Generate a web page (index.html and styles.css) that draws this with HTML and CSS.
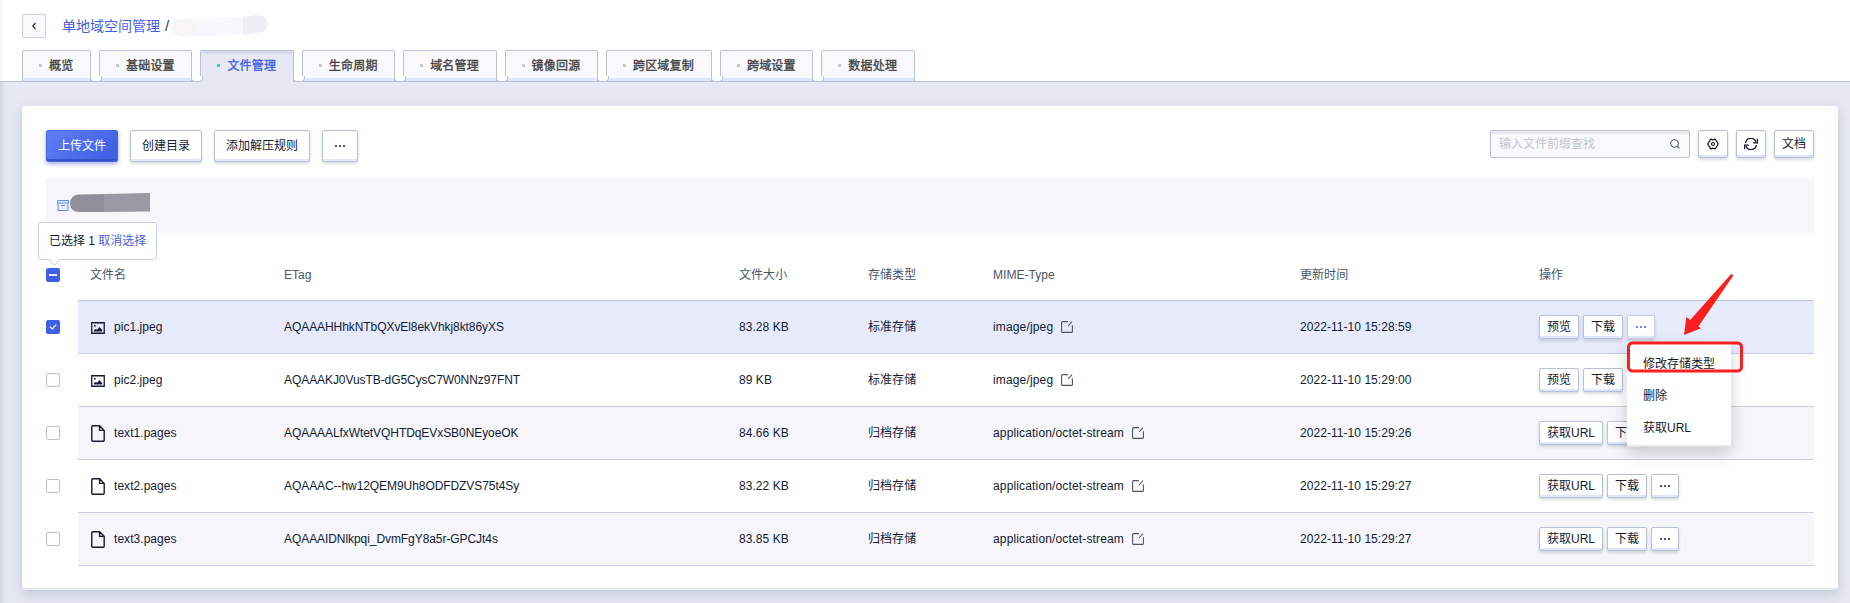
FILE: index.html
```
<!DOCTYPE html>
<html lang="zh-CN">
<head>
<meta charset="utf-8">
<title>文件管理</title>
<link rel="stylesheet" href="styles.css">
</head>
<body>
<svg class="sprite" width="0" height="0">
  <symbol id="i-image" viewBox="0 0 14 12"><path d="M.75.75h12.5v10.5H.75z" fill="none" stroke="currentColor" stroke-width="1.3"/><rect x="3" y="3" width="1.600" height="1.600" fill="currentColor"/><path d="M2.800 9.600V8.300L4.800 6.900l1.300.9L8.500 5l2.700 2.900v1.700z" fill="currentColor"/></symbol>
  <symbol id="i-file" viewBox="0 0 14 17"><path d="M8.6.8H1.7a.9.9 0 0 0-.9.9v13.6c0 .5.4.9.9.9h10.6c.5 0 .9-.4.9-.9V5.4zM8.6.8v4.6h4.6" fill="none" stroke="currentColor" stroke-width="1.4" stroke-linejoin="round"/></symbol>
  <symbol id="i-edit" viewBox="0 0 12 12"><path d="M7 .6H1.6a1 1 0 0 0-1 1v8.800a1 1 0 0 0 1 1h8.800a1 1 0 0 0 1-1V4.200M7 5l4-4.400" fill="none" stroke="currentColor" stroke-width="1.100"/></symbol>
  <symbol id="i-dots" viewBox="0 0 10 2"><path d="M0 .2h2v1.6H0zM4 .2h2v1.6H4zM8 .2h2v1.6H8z" fill="currentColor"/></symbol>
</svg>
<header class="head">
  <div class="crumbs">
    <a class="back"><svg width="4" height="8" viewBox="0 0 4 8"><path d="M3.500 1L.8 4l2.700 3" fill="none" stroke="#1e2a4a" stroke-width="1.2"/></svg></a>
    <a class="crumb">单地域空间管理</a><span class="slash">/</span>
    <svg class="smudge" width="96" height="22" viewBox="0 0 96 22"><path d="M0 13Q0 4 10 4L25 3V21H10Q1 21 0 13z" fill="#f8f5f7"/><path d="M25 3L71 1.500V20L25 21z" fill="#f7f8fe"/><path d="M71 1.500L86 0Q96 1 96 9Q96 17 86 18L71 20z" fill="#efeef4"/></svg>
  </div>
  <nav class="tabs">
    <a class="tab short">概览</a><a class="tab">基础设置</a><a class="tab active">文件管理</a><a class="tab">生命周期</a><a class="tab">域名管理</a><a class="tab">镜像回源</a><a class="tab long">跨区域复制</a><a class="tab">跨域设置</a><a class="tab">数据处理</a>
  </nav>
</header>
<main class="card">
  <div class="toolbar">
    <button class="btn primary">上传文件</button>
    <button class="btn">创建目录</button>
    <button class="btn">添加解压规则</button>
    <button class="btn more"><svg width="10" height="2"><use href="#i-dots"/></svg></button>
    <div class="tools">
      <div class="search"><span>输入文件前缀查找</span><svg width="10" height="10" viewBox="0 0 10 10"><circle cx="4.500" cy="4.500" r="3.800" fill="none" stroke="#4b5875" stroke-width="1.100"/><path d="M7 7l2.300 2.300" stroke="#4b5875" stroke-width="1.200"/></svg></div>
      <button class="btn sq"><svg width="12" height="12" viewBox="0 0 12 12"><path d="M3.700 1.100L6 1.900l2.300-.8 1.200 2L11.300 6 9.500 8.900l-1.200 2L6 10.100l-2.300.8-1.200-2L.7 6l1.800-2.900z" fill="none" stroke="#131b33" stroke-width="1.200" stroke-linejoin="round"/><circle cx="6" cy="6" r="1.500" fill="none" stroke="#131b33" stroke-width="1.200"/></svg></button>
      <button class="btn sq"><svg width="14" height="12" viewBox="0 0 14 12"><path d="M1.600 4.800A5.400 5.400 0 0 1 12 4M12.400 7.200A5.400 5.400 0 0 1 2 8" fill="none" stroke="#131b33" stroke-width="1.300"/><path d="M13.400.8v4H9.300M.6 11.200v-4h4.100" fill="none" stroke="#131b33" stroke-width="1.300"/></svg></button>
      <button class="btn doc">文档</button>
    </div>
  </div>
  <div class="path">
    <svg width="12" height="11" viewBox="0 0 12 11"><path d="M.5.500h11v2.500H.5zM1 3v7.500h10V3" fill="#e6ebfd" stroke="#6a86f0" stroke-width="1"/><path d="M4 5.500h4" stroke="#6a86f0"/></svg>
    <svg width="81" height="20" viewBox="0 0 81 20"><path d="M0 11Q0 2 9 1.500L34 1V19H9Q1 19 0 11z" fill="#908e98"/><path d="M34 1L80 0V18.500L34 19z" fill="#9b99a3"/></svg>
    <div class="picked">已选择 1 <a>取消选择</a></div>
  </div>
  <section class="list">
    <div class="row th"><i class="box some"></i><div class="cells"><span>文件名</span><span>ETag</span><span>文件大小</span><span>存储类型</span><span>MIME-Type</span><span>更新时间</span><span>操作</span></div></div>
    <div class="row sel"><i class="box on"><svg width="8" height="6" viewBox="0 0 8 6"><path d="M.7 2.600L3.200 5 7.300.7" fill="none" stroke="#fff" stroke-width="1.200"/></svg></i><div class="cells"><span><svg class="ic pic" width="14" height="12"><use href="#i-image"/></svg>pic1.jpeg</span><span class="tag">AQAAAHHhkNTbQXvEl8ekVhkj8kt86yXS</span><span>83.28 KB</span><span>标准存储</span><span class="mime">image/jpeg<svg class="ed" width="12" height="12"><use href="#i-edit"/></svg></span><span>2022-11-10 15:28:59</span><span class="ops"><b>预览</b><b>下载</b><b class="open"><svg width="10" height="2"><use href="#i-dots"/></svg>
      <div class="menu"><p>修改存储类型</p><p>删除</p><p>获取URL</p></div>
      <svg class="mark" width="118" height="102" viewBox="0 0 118 102"><rect x="1.500" y="71" width="113" height="28" rx="4" fill="none" stroke="#fb1f1f" stroke-width="3"/><path d="M57 63L59.300 45 63.200 48 103.500 2.700Q105.500 1 106 4L71.300 54.500 74 56.300z" fill="#fb1f1f"/></svg></b></span></div></div>
    <div class="row"><i class="box"></i><div class="cells"><span><svg class="ic pic" width="14" height="12"><use href="#i-image"/></svg>pic2.jpeg</span><span class="tag">AQAAAKJ0VusTB-dG5CysC7W0NNz97FNT</span><span>89 KB</span><span>标准存储</span><span class="mime">image/jpeg<svg class="ed" width="12" height="12"><use href="#i-edit"/></svg></span><span>2022-11-10 15:29:00</span><span class="ops"><b>预览</b><b>下载</b></span></div></div>
    <div class="row alt"><i class="box"></i><div class="cells"><span><svg class="ic" width="14" height="17"><use href="#i-file"/></svg>text1.pages</span><span class="tag">AQAAAALfxWtetVQHTDqEVxSB0NEyoeOK</span><span>84.66 KB</span><span>归档存储</span><span class="mime">application/octet-stream<svg class="ed" width="12" height="12"><use href="#i-edit"/></svg></span><span>2022-11-10 15:29:26</span><span class="ops"><b>获取URL</b><b>下载</b></span></div></div>
    <div class="row"><i class="box"></i><div class="cells"><span><svg class="ic" width="14" height="17"><use href="#i-file"/></svg>text2.pages</span><span class="tag">AQAAAC--hw12QEM9Uh8ODFDZVS75t4Sy</span><span>83.22 KB</span><span>归档存储</span><span class="mime">application/octet-stream<svg class="ed" width="12" height="12"><use href="#i-edit"/></svg></span><span>2022-11-10 15:29:27</span><span class="ops"><b>获取URL</b><b>下载</b><b><svg width="10" height="2"><use href="#i-dots"/></svg></b></span></div></div>
    <div class="row alt"><i class="box"></i><div class="cells"><span><svg class="ic" width="14" height="17"><use href="#i-file"/></svg>text3.pages</span><span class="tag">AQAAAIDNlkpqi_DvmFgY8a5r-GPCJt4s</span><span>83.85 KB</span><span>归档存储</span><span class="mime">application/octet-stream<svg class="ed" width="12" height="12"><use href="#i-edit"/></svg></span><span>2022-11-10 15:29:27</span><span class="ops"><b>获取URL</b><b>下载</b><b><svg width="10" height="2"><use href="#i-dots"/></svg></b></span></div></div>
  </section>
</main>
</body>
</html>
```
FILE: styles.css
```
* { box-sizing: border-box; }
body {
  margin: 0; height: 603px; overflow: hidden;
  background: #e6e9f3;
  box-shadow: inset 5px 0 5px -3px rgba(90, 105, 150, .18);
  font: 12px/18px "Liberation Sans", "Noto Sans CJK SC", sans-serif;
  color: #131b33;
}
svg { display: block; flex: none; }
.sprite { position: absolute; }
.head { height: 82px; padding: 14px 22px 0; background: linear-gradient(90deg, #f4f5f9, #fff 4px); border-bottom: 1px solid #b8c1d8; }
.crumbs { display: flex; align-items: center; height: 24px; font-size: 14px; }
.back { width: 24px; height: 24px; margin-right: 16px; display: flex; align-items: center; justify-content: center; border: 1px solid #c9cfe6; background: #f9f9fc; border-radius: 1px; }
.crumb { color: #3f60e6; }
.slash { margin: 0 3px 0 5px; color: #333d55; font-size: 15px; }
.tabs { display: flex; gap: 8px; margin-top: 12px; }
.tab {
  position: relative; width: 93.400px; height: 32px; padding-left: 26px;
  line-height: 30px; letter-spacing: .2px; color: #434343; -webkit-text-stroke: .35px currentColor;
  border: 1px solid #b8c1d8; border-radius: 2px 2px 0 0;
  background: #f9f9fb; box-shadow: inset 0 -3px #dfe6fb;
}
.tab.short { width: 69px; }
.tab.long { width: 106px; }
.tab::before { content: ""; position: absolute; left: 16px; top: 13px; width: 3px; height: 3px; background: #c8c9cf; }
.tab::after { content: ""; position: absolute; z-index: 1; left: 100%; bottom: -1px; width: 10px; height: 5px; background: #fff; border: 1px solid #b8c1d8; border-top: 0; border-radius: 0 0 4px 4px; }
.tab:last-child::after { display: none; }
.tab.active { color: #3f60e6; background: #e6e9f3; box-shadow: inset 0 3px #d6daea; border-bottom-color: #e6e9f3; }
.tab.active::before { background: #3cc9e8; }
.card { margin: 24px 12px 0 22px; height: 484px; padding: 24px 24px 0; background: #fff; border-radius: 4px; box-shadow: inset 0 -2px #e8e8e8, 0 4px 12px rgba(60, 70, 110, .22); }
.toolbar { display: flex; gap: 12px; height: 32px; }
.btn {
  height: 32px; padding: 0 11px; display: flex; align-items: center; justify-content: center;
  font: inherit; color: inherit; white-space: nowrap; background: #fff; border: 1px solid #b8c1d8; border-radius: 2px;
  box-shadow: inset 0 -2px #dfe6fb, 0 2px 3px rgba(40, 50, 80, .17);
}
.btn.primary { width: 72px; color: #fff; border-color: #4a68e6; background: linear-gradient(135deg, #5f80f3, #3b5ce5); box-shadow: inset 0 -2px #3552c8, 0 2px 4px rgba(50, 80, 200, .45); }
.btn.more { width: 36px; }
.tools { margin-left: auto; display: flex; gap: 8px; }
.tools .btn { height: 28px; }
.btn.sq { width: 30px; padding: 0; }
.btn.doc { width: 40px; padding: 0; }
.search { width: 200px; height: 28px; padding: 0 9px 0 8px; display: flex; align-items: center; justify-content: space-between; color: #c3c5ca; background: #f9f9fc; border: 1px solid #b8c1d8; border-radius: 2px; box-shadow: inset 0 3px #e9e9ec; }
.path { position: relative; height: 55px; margin-top: 16px; padding: 15px 0 0 11px; display: flex; gap: 1px; background: #f5f5fa; }
.path svg:first-child { margin-top: 7px; }
.picked { position: absolute; left: -8px; top: 44px; width: 119px; height: 38px; padding-left: 10px; line-height: 36px; white-space: nowrap; background: #fff; border: 1px solid #c9cfe6; border-radius: 3px; }
.picked::after { content: ""; position: absolute; left: 11px; top: 32px; width: 8px; height: 8px; transform: rotate(45deg); background: #fff; border: solid #c9cfe6; border-width: 0 1px 1px 0; }
.picked a { color: #3f60e6; }
.list { margin-top: 15px; }
.row { display: flex; align-items: center; height: 53px; }
.box { width: 14px; height: 14px; margin: -2px 18px 0 0; display: flex; align-items: center; justify-content: center; border: 1px solid #b8c1d8; border-radius: 2px; background: #fff; }
.box.some, .box.on { background: #3f60e6; border-color: #3f60e6; }
.box.some::before { content: ""; width: 8px; height: 2px; background: #e3e8fd; }
.cells { flex: 1; height: 53px; padding-left: 12px; display: grid; grid-template-columns: 194px 455px 129px 125px 307px 239px 1fr; align-items: center; border-bottom: 1px solid #c9cfe6; letter-spacing: .05px; }
.th .cells { padding-top: 2px; color: #4b5669; border-color: #b8c1d8; }
.th .box { margin-top: 1px; }
.sel .cells { background: #e6eafa; }
.alt .cells { background: #f5f5fa; }
.cells > span { display: flex; align-items: center; }
.tag { letter-spacing: -.07px; }
.mime { letter-spacing: .15px; }
.ic { margin: 0 9px 0 1px; }
.ic.pic { margin-top: 2px; }
.ed { margin-left: 8px; color: #4b5669; }
.ops { gap: 4px; }
.ops b { position: relative; height: 24px; padding: 0 7px; display: flex; align-items: center; font-weight: 400; letter-spacing: 0; border: 1px solid #b8c1d8; border-radius: 2px; background: #fff; box-shadow: inset 0 -2px #dfe6fb, 0 2px 3px rgba(40, 50, 80, .17); }
.ops b > svg:first-child { margin: 0 1px; }
.ops .open { color: #3f60e6; border-color: #c9cfe6; }
.menu { position: absolute; z-index: 2; left: -1px; top: 27px; width: 104px; height: 104px; padding-top: 5px; background: #fff; color: #131b33; box-shadow: inset 0 -2px #e8e8e8, 0 6px 16px rgba(40, 45, 70, .22); border-radius: 2px; }
.menu p { margin: 0; padding-left: 16px; line-height: 32px; }
.mark { position: absolute; z-index: 3; left: -1px; top: -44px; }
```
